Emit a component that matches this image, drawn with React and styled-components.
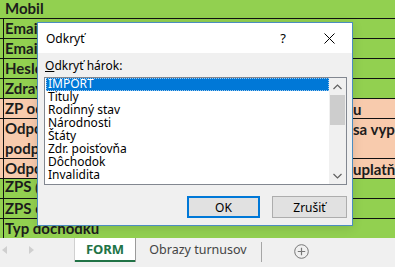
import React from 'react';
import styled, { createGlobalStyle } from 'styled-components';

const GREEN = '#92d050';
const ORANGE = '#f8cbad';
const UI_FONT = '"Noto Sans", "Open Sans", sans-serif';

const Global = createGlobalStyle`
  html, body { margin: 0; padding: 0; }
  body { width: 395px; height: 267px; overflow: hidden; background: #fff; }
`;

const Page = styled.div`
  position: relative;
  width: 395px;
  height: 267px;
  display: flex;
  flex-direction: column;
  overflow: hidden;
`;

const Sheet = styled.div`
  height: 238px;
  display: flex;
  flex-direction: column;
  overflow: hidden;
  flex-shrink: 0;
`;

const Row = styled.div`
  box-sizing: border-box;
  flex-shrink: 0;
  height: ${p => p.$h}px;
  display: flex;
  padding-left: 3px;
  background: ${p => (p.$tone === 'orange' ? ORANGE : GREEN)};
  border-bottom: 1px solid #111;
`;

const Cell = styled.div`
  flex: 1;
  min-width: 0;
  display: flex;
  flex-direction: column;
  justify-content: flex-end;
  padding-left: ${p => (p.$edge ? 1 : 2)}px;
  border-left: ${p => (p.$edge ? '1px solid #111' : 'none')};
  font-family: Lato, "Liberation Sans", sans-serif;
  font-weight: 700;
  font-size: 15px;
  line-height: 20px;
  color: #1c1c1c;
  white-space: nowrap;
  overflow: hidden;
`;

const SideCell = styled(Cell)`
  flex: 0 0 42px;
  justify-content: flex-start;
  padding-left: ${p => p.$indent}px;
`;

const Small = styled.span`
  font-size: 11px;
`;

const TabBar = styled.div`
  flex: 1;
  display: flex;
  align-items: flex-start;
  background: #f0f0f0;
  font-family: ${UI_FONT};
`;

const NavArrows = styled.div`
  width: 75px;
  height: 24px;
  display: flex;
  align-items: center;
  gap: 22px;
  padding-left: 2px;
  box-sizing: border-box;
`;

const Tab = styled.div`
  box-sizing: border-box;
  height: 24px;
  width: ${p => p.$w}px;
  display: flex;
  align-items: center;
  justify-content: center;
  font-size: ${p => (p.$active ? 13 : 12.5)}px;
  font-weight: ${p => (p.$active ? 700 : 400)};
  color: ${p => (p.$active ? '#217346' : '#444')};
  background: ${p => (p.$active ? '#fff' : 'transparent')};
  border-bottom: ${p => (p.$active ? '2px solid #217346' : '2px solid transparent')};
  box-shadow: ${p => (p.$active ? '1px 0 0 #9a9a9a, -1px 0 0 #d0d0d0' : 'none')};
`;

const Separator = styled.div`
  width: 1px;
  height: 20px;
  margin-top: 4px;
  background: #a6a6a6;
`;

const AddSheet = styled.div`
  width: 78px;
  height: 26px;
  display: flex;
  align-items: center;
  justify-content: center;
  padding-right: 0;
`;

const Dialog = styled.div`
  position: absolute;
  left: 37px;
  top: 22px;
  width: 316px;
  height: 204px;
  box-sizing: border-box;
  border: 1px solid #4b8dc0;
  background: #f0f0f0;
  display: flex;
  flex-direction: column;
  font-family: ${UI_FONT};
  font-size: 12px;
  color: #000;
  box-shadow: 0 2px 10px rgba(0, 0, 0, 0.12);
`;

const TitleBar = styled.div`
  height: 30px;
  flex-shrink: 0;
  display: flex;
  align-items: center;
  background: #fff;
`;

const Title = styled.div`
  flex: 1;
  padding-left: 8px;
  font-size: 12px;
`;

const Caption = styled.div`
  width: 46px;
  height: 30px;
  display: flex;
  align-items: center;
  justify-content: center;
  font-size: 13px;
`;

const Body = styled.div`
  flex: 1;
  display: flex;
  flex-direction: column;
  padding: 6px 5px 0 6px;
`;

const Label = styled.div`
  height: 14px;
  line-height: 14px;
  padding-left: 1px;
  margin-bottom: 4px;
`;

const ListBox = styled.div`
  height: 108px;
  box-sizing: border-box;
  border: 1px solid #828790;
  background: #fff;
  display: flex;
`;

const Items = styled.ul`
  flex: 1;
  margin: 0;
  padding: 0 0 0 1px;
  list-style: none;
  overflow: hidden;
`;

const Item = styled.li`
  box-sizing: border-box;
  height: 13px;
  line-height: 12px;
  padding-left: 2px;
  white-space: nowrap;
  background: ${p => (p.$selected ? '#0078d7' : 'transparent')};
  color: ${p => (p.$selected ? '#fff' : '#000')};
  outline: ${p => (p.$selected ? '1px dotted #9fc9ee' : 'none')};
  outline-offset: -1px;
`;

const ScrollBar = styled.div`
  width: 17px;
  display: flex;
  flex-direction: column;
  background: #f0f0f0;
`;

const ScrollBtn = styled.div`
  height: 17px;
  display: flex;
  align-items: center;
  justify-content: center;
`;

const Track = styled.div`
  flex: 1;
  display: flex;
  flex-direction: column;
`;

const Thumb = styled.div`
  height: 30px;
  margin: 0 1px;
  background: #cdcdcd;
`;

const Buttons = styled.div`
  display: flex;
  justify-content: flex-end;
  gap: 12px;
  margin-top: 11px;
`;

const Button = styled.button`
  width: ${p => p.$w}px;
  height: 22px;
  box-sizing: border-box;
  padding: 0;
  font-family: ${UI_FONT};
  font-size: 12px;
  color: #000;
  background: #e1e1e1;
  border: ${p => (p.$primary ? '2px solid #0078d7' : '1px solid #adadad')};
`;

const Tri = ({ dir }) => (
  <svg width="5" height="8" viewBox="0 0 5 8">
    <polygon points={dir === 'left' ? '5,0 0,4 5,8' : '0,0 5,4 0,8'} fill="#cfcfcf" />
  </svg>
);

const Chevron = ({ up }) => (
  <svg width="9" height="6" viewBox="0 0 9 6">
    <polyline
      points={up ? '0.5,5 4.5,1 8.5,5' : '0.5,1 4.5,5 8.5,1'}
      fill="none"
      stroke="#606060"
      strokeWidth="1.2"
    />
  </svg>
);

const CloseIcon = () => (
  <svg width="11" height="11" viewBox="0 0 11 11">
    <path d="M0.5 0.5 L10.5 10.5 M10.5 0.5 L0.5 10.5" stroke="#000" strokeWidth="1" />
  </svg>
);

const PlusCircle = () => (
  <svg width="15" height="15" viewBox="0 0 15 15">
    <circle cx="7.5" cy="7.5" r="6.8" fill="none" stroke="#777" strokeWidth="1" />
    <path d="M7.5 3.8 V11.2 M3.8 7.5 H11.2" stroke="#777" strokeWidth="1.2" />
  </svg>
);

const rows = [
  { h: 19, text: 'Mobil', edge: false },
  { text: 'Email' },
  { text: 'Email' },
  { text: 'Heslo' },
  { text: 'Zdravotná poisťovňa' },
  { tone: 'orange', text: 'ZP odvádza', side: 'u', indent: 1 },
  {
    tone: 'orange',
    h: 40,
    lines: ['Odpočítateľná položka', 'podpísané vyhlásenie'],
    side: 'sa vyplňa',
    indent: 2,
  },
  { tone: 'orange', text: 'Odpočet sa uplatňuje', side: 'uplatňuje', indent: 5 },
  { text: 'ZPS ', small: '(preukaz)' },
  { text: 'ZPS od' },
  { text: 'Typ dochodku' },
];

const sheets = ['IMPORT', 'Tituly', 'Rodinný stav', 'Národnosti', 'Štáty', 'Zdr. poisťovňa', 'Dôchodok', 'Invalidita'];

export default function App() {
  return (
    <Page>
      <Global />
      <Sheet>
        {rows.map((r, i) => (
          <Row key={i} $h={r.h || 20} $tone={r.tone}>
            <Cell $edge={r.edge !== false}>
              {r.lines ? (
                r.lines.map((l, j) => <div key={j}>{l}</div>)
              ) : (
                <div>
                  {r.text}
                  {r.small && <Small>{r.small}</Small>}
                </div>
              )}
            </Cell>
            <SideCell $indent={r.indent || 0}>
              <div>{r.side || '\u00a0'}</div>
            </SideCell>
          </Row>
        ))}
      </Sheet>
      <TabBar>
        <NavArrows>
          <Tri dir="left" />
          <Tri dir="right" />
        </NavArrows>
        <Tab $active $w={60}>FORM</Tab>
        <Tab $w={126}>Obrazy turnusov</Tab>
        <Separator />
        <AddSheet>
          <PlusCircle />
        </AddSheet>
      </TabBar>

      <Dialog>
        <TitleBar>
          <Title>Odkryť</Title>
          <Caption>?</Caption>
          <Caption>
            <CloseIcon />
          </Caption>
        </TitleBar>
        <Body>
          <Label>
            <u>O</u>dkryť hárok:
          </Label>
          <ListBox>
            <Items>
              {sheets.map((s, i) => (
                <Item key={s} $selected={i === 0}>
                  {s}
                </Item>
              ))}
            </Items>
            <ScrollBar>
              <ScrollBtn>
                <Chevron up />
              </ScrollBtn>
              <Track>
                <Thumb />
              </Track>
              <ScrollBtn>
                <Chevron />
              </ScrollBtn>
            </ScrollBar>
          </ListBox>
          <Buttons>
            <Button $primary $w={73}>OK</Button>
            <Button $w={75}>Zrušiť</Button>
          </Buttons>
        </Body>
      </Dialog>
    </Page>
  );
}
